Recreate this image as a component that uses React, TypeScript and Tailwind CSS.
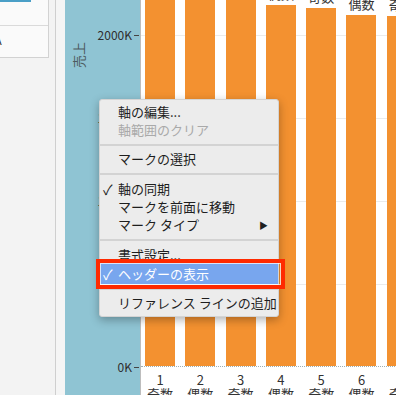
const bars = [400, 400, 400, 361, 358, 351, 350];
const ticks = ["2000K", "1500K", "1000K", "500K", "0K"];

function Item({ label, check, disabled, arrow }: { label: string; check?: boolean; disabled?: boolean; arrow?: boolean }) {
  return (
    <div className={"relative flex items-center h-[18px] pl-[18px] " + (disabled ? "text-[#a9a9a9]" : "text-[#1e1e1e]")}>
      {check && <span className="absolute left-[3px] text-[14px] leading-none">✓</span>}
      <span>{label}</span>
      {arrow && <span className="absolute right-[10px] text-[9px] leading-none">▶</span>}
    </div>
  );
}

function Sep({ h }: { h: string }) {
  return (
    <div className={"flex items-center " + h}>
      <div className="w-full h-[2px] bg-[#d3d3d3]" />
    </div>
  );
}

export default function App() {
  return (
    <div className="relative w-[396px] h-[395px] overflow-hidden flex bg-white font-['Noto_Sans_CJK_JP','Noto_Sans',sans-serif]">
      {/* left shelf */}
      <div className="w-[56px] shrink-0 bg-[#f3f3f3] border-r border-[#cfcfcf]">
        <div className="w-[49px] h-[58px] bg-[#fafafa] border-r border-b border-[#d2d2d2]">
          <div className="w-[31px] h-[2px] bg-[#4a9fc7]" />
          <div className="h-[23px]" />
          <div className="border-t border-[#dadada] pt-[9px] text-[11px] leading-none text-[#333] -ml-[5px]">A</div>
        </div>
      </div>
      <div className="w-[9px] shrink-0 bg-[#f5f5f5]" />

      {/* axis pane */}
      <div className="w-[75px] shrink-0 bg-[#8fc4d3] flex">
        <div className="w-[21px] pl-[8px] pt-[42px]">
          <div className="[writing-mode:vertical-rl] [text-orientation:sideways] rotate-180 text-[13px] leading-[12px] text-[#4d5a5e]">売上</div>
        </div>
        <div className="flex-1 flex flex-col items-end pt-[28px] gap-[69px] pr-[1px]">
          {ticks.map((t) => (
            <div key={t} className="h-[14px] flex items-center text-[12px] text-[#2e2e2e]">
              <span>{t}</span>
              <span className="ml-[2px] w-[5px] h-px bg-[#444]" />
            </div>
          ))}
        </div>
      </div>
      <div className="w-px shrink-0 bg-[#bdbdbd]" />

      {/* chart */}
      <div className="flex-1 flex flex-col">
        <div className="relative h-[366px] shrink-0 overflow-hidden">
          <div className="absolute inset-x-0 top-[35px] h-px bg-[#ebebeb]" />
          <div className="absolute inset-x-0 top-[118px] h-px bg-[#ebebeb]" />
          <div className="absolute inset-x-0 top-[201px] h-px bg-[#ebebeb]" />
          <div className="absolute inset-x-0 top-[284px] h-px bg-[#ebebeb]" />
          <div className="relative flex items-end h-full pl-[4px] gap-[10.3px]">
            {bars.map((h, i) => (
              <div key={i} className="w-[30px] shrink-0 flex flex-col items-center">
                <span className="text-[13px] leading-[14px] mb-[4px] text-[#333] whitespace-nowrap">{i % 2 === 0 ? "奇数" : "偶数"}</span>
                <div className="w-[30px] bg-[#f39130]" style={{ height: h }} />
              </div>
            ))}
          </div>
        </div>
        <div className="h-px shrink-0 border-t border-dotted border-[#9fb0b4]" />
        <div className="flex shrink-0 pl-[4px] gap-[10.3px] pt-[6px]">
          {bars.map((_, i) => (
            <div key={i} className="w-[30px] shrink-0 flex flex-col items-center text-[13px] leading-[13px] text-[#333] whitespace-nowrap">
              <span>{i + 1}</span>
              <span className="mt-[1px]">{i % 2 === 0 ? "奇数" : "偶数"}</span>
            </div>
          ))}
        </div>
      </div>

      {/* context menu */}
      <div className="absolute left-[99px] top-[99px] w-[180px] h-[218px] bg-[#ececec] border border-[#d4d4d4] rounded-[3px] shadow-[0_3px_10px_rgba(0,0,0,0.3)] pt-[3px] text-[13px]">
        <Item label="軸の編集..." />
        <Item label="軸範囲のクリア" disabled />
        <Sep h="h-[11px]" />
        <Item label="マークの選択" />
        <Sep h="h-[12px]" />
        <Item label="軸の同期" check />
        <Item label="マークを前面に移動" />
        <Item label="マーク タイプ" arrow />
        <Sep h="h-[12px]" />
        <div className="flex items-center h-[17px] pl-[18px] text-[#1e1e1e]">書式設定...</div>
        <div className="relative flex items-center h-[21px] pl-[18px] bg-[#78a6ee] text-white">
          <span className="absolute left-[3px] text-[14px] leading-none">✓</span>
          <span>ヘッダーの表示</span>
        </div>
        <Sep h="h-[10px]" />
        <Item label="リファレンス ラインの追加" />
      </div>

      {/* highlight frame */}
      <div className="absolute left-[96px] top-[259px] w-[189px] h-[30px] border-4 border-[#ff2a00]">
        <div className="h-full border border-white/70" />
      </div>
    </div>
  );
}
